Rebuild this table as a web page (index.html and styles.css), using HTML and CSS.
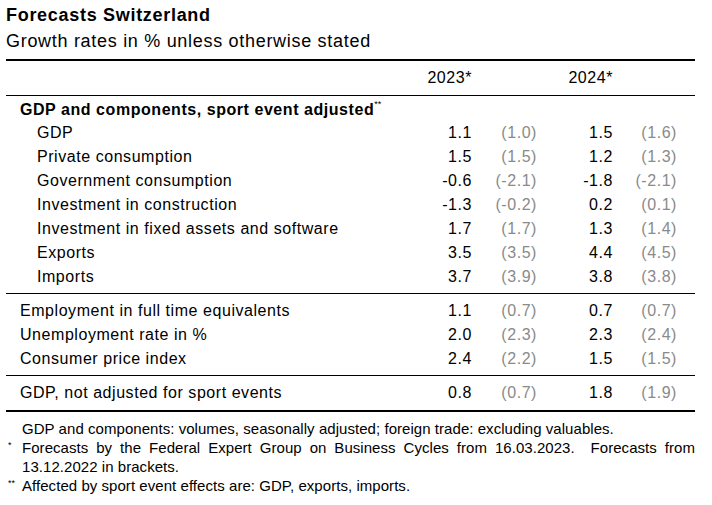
FILE: index.html
```html
<!DOCTYPE html>
<html>
<head>
<meta charset="utf-8">
<link rel="stylesheet" href="styles.css">
</head>
<body>
<div class="page">
  <h1 class="title">Forecasts Switzerland</h1>
  <p class="subtitle">Growth rates in % unless otherwise stated</p>
  <table class="tbl">
    <colgroup>
      <col class="c-label"><col class="c-v"><col class="c-b"><col class="c-v2"><col class="c-b2"><col class="c-pad">
    </colgroup>
    <thead>
      <tr class="head">
        <th></th><th class="num">2023*</th><th></th><th class="num">2024*</th><th></th><th></th>
      </tr>
    </thead>
    <tbody class="grp">
      <tr class="sect"><td colspan="6">GDP and components, sport event adjusted<sup>**</sup></td></tr>
      <tr><td class="ind">GDP</td><td class="num">1.1</td><td class="num br">(1.0)</td><td class="num">1.5</td><td class="num br">(1.6)</td><td></td></tr>
      <tr><td class="ind">Private consumption</td><td class="num">1.5</td><td class="num br">(1.5)</td><td class="num">1.2</td><td class="num br">(1.3)</td><td></td></tr>
      <tr><td class="ind">Government consumption</td><td class="num">-0.6</td><td class="num br">(-2.1)</td><td class="num">-1.8</td><td class="num br">(-2.1)</td><td></td></tr>
      <tr><td class="ind">Investment in construction</td><td class="num">-1.3</td><td class="num br">(-0.2)</td><td class="num">0.2</td><td class="num br">(0.1)</td><td></td></tr>
      <tr><td class="ind">Investment in fixed assets and software</td><td class="num">1.7</td><td class="num br">(1.7)</td><td class="num">1.3</td><td class="num br">(1.4)</td><td></td></tr>
      <tr><td class="ind">Exports</td><td class="num">3.5</td><td class="num br">(3.5)</td><td class="num">4.4</td><td class="num br">(4.5)</td><td></td></tr>
      <tr class="last"><td class="ind">Imports</td><td class="num">3.7</td><td class="num br">(3.9)</td><td class="num">3.8</td><td class="num br">(3.8)</td><td></td></tr>
    </tbody>
    <tbody class="grp">
      <tr class="first"><td class="lab">Employment in full time equivalents</td><td class="num">1.1</td><td class="num br">(0.7)</td><td class="num">0.7</td><td class="num br">(0.7)</td><td></td></tr>
      <tr><td class="lab">Unemployment rate in %</td><td class="num">2.0</td><td class="num br">(2.3)</td><td class="num">2.3</td><td class="num br">(2.4)</td><td></td></tr>
      <tr class="last"><td class="lab">Consumer price index</td><td class="num">2.4</td><td class="num br">(2.2)</td><td class="num">1.5</td><td class="num br">(1.5)</td><td></td></tr>
    </tbody>
    <tbody class="grp end">
      <tr class="first last"><td class="lab">GDP, not adjusted for sport events</td><td class="num">0.8</td><td class="num br">(0.7)</td><td class="num">1.8</td><td class="num br">(1.9)</td><td></td></tr>
    </tbody>
  </table>
  <div class="notes">
    <span class="mk"></span><span class="nt">GDP and components: volumes, seasonally adjusted; foreign trade: excluding valuables.</span>
    <span class="mk">*</span><span class="nt just">Forecasts by the Federal Expert Group on Business Cycles from 16.03.2023.&nbsp; Forecasts from 13.12.2022 in brackets.</span>
    <span class="mk">**</span><span class="nt">Affected by sport event effects are: GDP, exports, imports.</span>
  </div>
</div>
</body>
</html>
```

FILE: styles.css
```css
html, body {
  margin: 0;
  padding: 0;
  background: #ffffff;
}
body {
  font-family: "Liberation Sans", Arial, sans-serif;
  color: #000000;
}
.page {
  width: 689px;
  margin-left: 6px;
  padding-top: 4px;
}
.title {
  margin: 0;
  font-size: 18px;
  font-weight: bold;
  line-height: 22px;
  letter-spacing: 0.7px;
}
.subtitle {
  margin: 4px 0 0 0;
  font-size: 18px;
  line-height: 22px;
  letter-spacing: 0.7px;
  padding-bottom: 7px;
}
.tbl {
  width: 689px;
  border-collapse: collapse;
  table-layout: fixed;
  font-size: 16px;
  letter-spacing: 0.55px;
}
.c-label { width: 416px; }
.c-v { width: 50px; }
.c-b { width: 65px; }
.c-v2 { width: 76px; }
.c-b2 { width: 64px; }
.c-pad { width: 18px; }
.tbl th, .tbl td {
  padding: 0;
  white-space: nowrap;
}
.tbl th {
  font-weight: normal;
}
.head th {
  border-top: 2px solid #000;
  border-bottom: 1px solid #000;
  height: 34px;
}
.num {
  text-align: right;
}
.br {
  color: #8a8a8a;
}
.tbl td {
  height: 24px;
  line-height: 18px;
}
.sect td {
  font-weight: bold;
  padding-left: 14px;
  height: 23px;
  padding-top: 2px;
}
.sect sup {
  font-size: 9px;
  font-weight: normal;
  vertical-align: 8px;
  line-height: 0;
  letter-spacing: 0;
}
.ind {
  padding-left: 31px !important;
}
.lab {
  padding-left: 14px !important;
}
.grp tr.last td {
  padding-bottom: 4px;
  border-bottom: 1px solid #000;
}
.grp tr.first td {
  padding-top: 5px;
}
.grp.end tr.last td {
  border-bottom: 2px solid #000;
  padding-bottom: 5px;
  padding-top: 5px;
}
.notes {
  display: grid;
  grid-template-columns: 16px 1fr;
  font-size: 15px;
  line-height: 19px;
  letter-spacing: 0.05px;
  padding-top: 7px;
}
.mk {
  font-size: 9px;
  line-height: 14px;
  padding-left: 2px;
}
.nt {
  display: block;
}
.just {
  text-align: justify;
}
```
